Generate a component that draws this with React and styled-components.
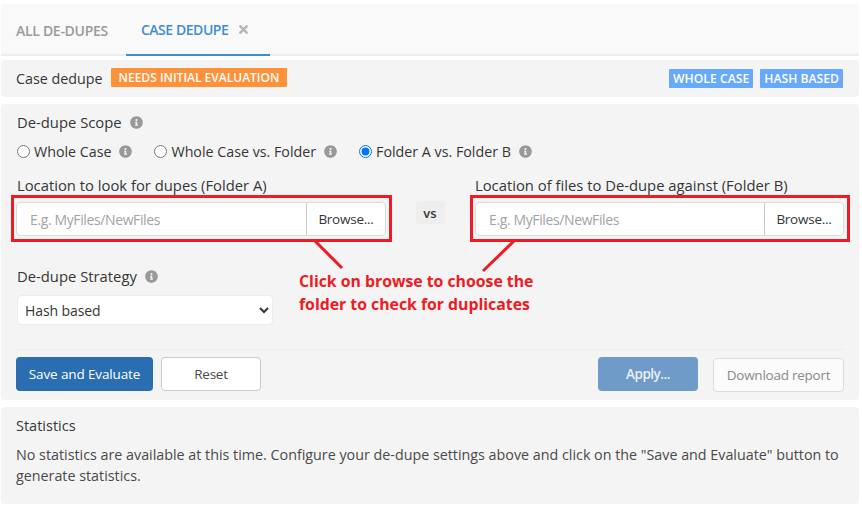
import React from 'react'
import styled, { createGlobalStyle } from 'styled-components'
import { FaInfoCircle, FaTimes } from 'react-icons/fa'

const Global = createGlobalStyle`
html, body { margin:0; padding:0; background:#fff; }
body { font-family:"Open Sans","Noto Sans",sans-serif; font-size:14px; color:#363636; }
* { box-sizing:border-box; }
`
const Page = styled.div`
width:862px;
height:510px;
padding:4px 3px 0 1px;
`
const Tabs = styled.div`
height:52px;
display:flex;
background:#f9f9f9;
border-bottom:2px solid #eeeeee;
`
const Tab = styled.div`
height:52px;
display:flex;
align-items:center;
gap:9px;
padding:${props => props.active ? '0 20px 0 15px' : '0 15px'};
margin-right:${props => props.active ? '0' : '3px'};
font-size:14px;
font-weight:600;
letter-spacing:${props => props.active ? '-0.45px' : '-0.3px'};
color:${props => props.active ? '#3e8ed0' : '#9a9a9a'};
border-bottom:${props => props.active ? '2px solid #3e8ed0' : 'none'};
svg { color:#b5b5b5; font-size:13px; }
`
const Panel = styled.div`
background:#f4f4f4;
border-radius:4px;
`
const Heading = styled(Panel)`
height:37px;
margin-top:4px;
padding:0 16px 0 15px;
display:flex;
align-items:center;
justify-content:space-between;
`
const Side = styled.div`
display:flex;
align-items:${props => props.align || 'center'};
gap:${props => props.gap || '7px'};
`
const Title = styled.span`
font-size:14.3px;
margin-right:1px;
`
const Tag = styled.span`
height:19px;
padding:0 ${props => props.padding || '4px'};
display:inline-flex;
align-items:center;
border-radius:1px;
font-size:${props => props.size || '12px'};
font-weight:600;
color:#fff;
background:${props => props.color};
position:relative;
top:${props => props.shift || '0'};
`
const Main = styled(Panel)`
position:relative;
height:296px;
margin-top:7px;
padding:8px 15px 0;
`
const Label = styled.div`
display:flex;
align-items:center;
gap:8px;
height:19px;
padding-left:${props => props.flush ? '0' : '1px'};
font-size:14.8px;
color:#363636;
svg { position:relative; top:1px; }
`
const Info = styled(FaInfoCircle)`
color:#999;
font-size:13px;
`
const Radios = styled.div`
display:flex;
align-items:center;
height:20px;
margin-top:10px;
`
const RadioItem = styled.label`
display:flex;
align-items:center;
gap:4px;
margin-right:${props => props.gap};
font-size:14.25px;
input { margin:0 0 0 1px; width:13px; height:13px; accent-color:#0075ff; }
svg { margin-left:4px; }
`
const Fields = styled.div`
display:grid;
grid-template-columns:370px 89px 369px;
margin-top:14px;
`
const Field = styled.div`
position:relative;
`
const InputGroup = styled.div`
display:flex;
height:34px;
margin-top:8px;
border:1px solid #dbdbdb;
border-radius:4px;
background:#fff;
`
const TextInput = styled.input`
flex:1;
min-width:0;
border:0;
padding:0 12px 0 13px;
background:transparent;
border-radius:4px 0 0 4px;
font:14px "Open Sans",sans-serif;
letter-spacing:-0.38px;
&::placeholder { color:#a3a3a3; opacity:1; }
`
const Browse = styled.div`
width:79px;
display:flex;
align-items:center;
justify-content:center;
border-left:1px solid #c9c9c9;
letter-spacing:-0.25px;
font-size:13.5px;
`
const Vs = styled.div`
justify-self:center;
align-self:start;
margin:26px 0 0 -1px;
width:29px;
height:23px;
display:flex;
align-items:center;
justify-content:center;
background:#eeeeee;
border-radius:4px;
font-size:13px;
font-weight:600;
`
const Frame = styled.div`
position:absolute;
left:-5px;
right:-5.5px;
top:20px;
height:47px;
border:3px solid #ed1c24;
pointer-events:none;
`
const Strategy = styled(Label)`
margin-top:30px;
`
const Select = styled.select`
display:block;
width:256px;
height:30px;
margin:10px 0 0 1px;
padding:0 3px;
border:1px solid #ececec;
border-radius:4px;
background:#fff;
color:#363636;
font:14px "Open Sans",sans-serif;
letter-spacing:-0.1px;
`
const Divider = styled.hr`
margin:24px 0 7px;
border:0;
border-top:1px solid #ededed;
`
const Actions = styled.div`
display:flex;
justify-content:space-between;
align-items:flex-start;
`
const Button = styled.div`
height:34px;
width:${props => props.width};
display:flex;
align-items:center;
justify-content:center;
border-radius:4px;
font-size:13.5px;
letter-spacing:${props => props.spacing || '-0.25px'};
border:1px solid ${props => props.border || 'transparent'};
color:${props => props.color || '#fff'};
background:${props => props.bg};
font-weight:${props => props.weight || 400};
margin-top:${props => props.offset || 0};
`
const Note = styled.div`
position:absolute;
left:298px;
top:166px;
font-size:15.8px;
line-height:23px;
font-weight:700;
color:#ed1c24;
`
const Callout = styled.svg`
position:absolute;
left:0;
top:0;
pointer-events:none;
`
const Stats = styled(Panel)`
height:97px;
margin-top:7px;
padding:9px 15px;
`
const StatsTitle = styled.div`
font-size:14.5px;
font-weight:500;
line-height:20px;
`
const StatsText = styled.div`
margin-top:9px;
font-size:14.3px;
line-height:20.6px;
color:#4a4a4a;
`

const FolderField = ({ label, flush }) => (
  <Field>
    <Label flush={flush}>{label}</Label>
    <InputGroup>
      <TextInput placeholder="E.g. MyFiles/NewFiles" />
      <Browse>Browse...</Browse>
    </InputGroup>
    <Frame />
  </Field>
)

const App = () => {
  return (
    <Page>
      <Global />
      <Tabs>
        <Tab>ALL DE-DUPES</Tab>
        <Tab active>CASE DEDUPE <FaTimes /></Tab>
      </Tabs>
      <Heading>
        <Side>
          <Title>Case dedupe</Title>
          <Tag color="#ff9238" padding="8px" shift="-1px">NEEDS INITIAL EVALUATION</Tag>
        </Side>
        <Side>
          <Tag color="#66a9ff" size="12.2px">WHOLE CASE</Tag>
          <Tag color="#66a9ff" size="12.2px">HASH BASED</Tag>
        </Side>
      </Heading>
      <Main>
        <Label>De-dupe Scope <Info /></Label>
        <Radios>
          <RadioItem gap="21px"><input type="radio" name="scope" readOnly /> Whole Case <Info /></RadioItem>
          <RadioItem gap="21px"><input type="radio" name="scope" readOnly /> Whole Case vs. Folder <Info /></RadioItem>
          <RadioItem gap="0"><input type="radio" name="scope" defaultChecked /> Folder A vs. Folder B <Info /></RadioItem>
        </Radios>
        <Fields>
          <FolderField label="Location to look for dupes (Folder A)" />
          <Vs>vs</Vs>
          <FolderField flush label="Location of files to De-dupe against (Folder B)" />
        </Fields>
        <Strategy>De-dupe Strategy <Info /></Strategy>
        <Select defaultValue="hash">
          <option value="hash">Hash based</option>
        </Select>
        <Divider />
        <Actions>
          <Side gap="8px" align="flex-start">
            <Button width="137px" bg="#2a6db0" weight={500} spacing="-0.13px">Save and Evaluate</Button>
            <Button width="100px" bg="#fff" color="#4a4a4a" border="#c9c9c9">Reset</Button>
          </Side>
          <Side gap="15px" align="flex-start">
            <Button width="100px" bg="#6f9bc8" weight={600} color="#e9f0f7" spacing="-0.5px">Apply...</Button>
            <Button width="131px" bg="#fbfbfb" color="#8a8a8a" border="#dcdcdc" offset="1px">Download report</Button>
          </Side>
        </Actions>
        <Callout width="858" height="296">
          <line x1="314" y1="137" x2="341" y2="164" stroke="#ed1c24" strokeWidth="3" />
          <line x1="513" y1="137" x2="482" y2="167" stroke="#ed1c24" strokeWidth="3" />
        </Callout>
        <Note>Click on browse to choose the<br />folder to check for duplicates</Note>
      </Main>
      <Stats>
        <StatsTitle>Statistics</StatsTitle>
        <StatsText>No statistics are available at this time. Configure your de-dupe settings above and click on the "Save and Evaluate" button to generate statistics.</StatsText>
      </Stats>
    </Page>
  )
}

export default App
